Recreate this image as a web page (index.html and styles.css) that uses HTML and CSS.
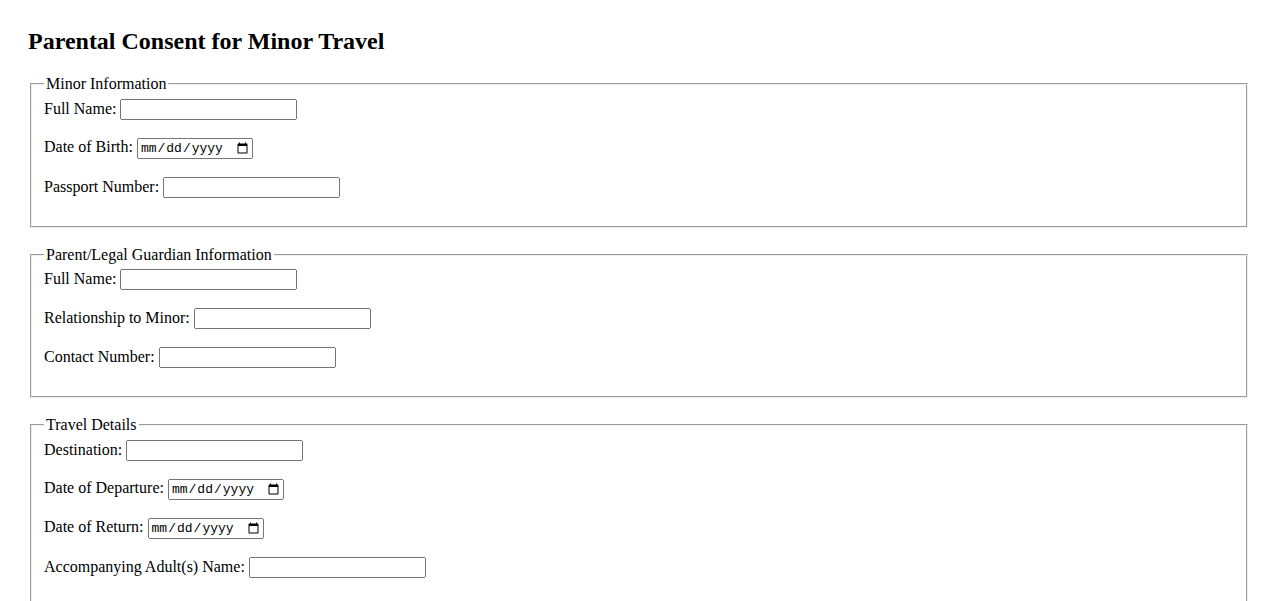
FILE: index.html
```html
<!DOCTYPE html>
<html>
<head>
<meta charset="utf-8">
<title>Parental Consent for Minor Travel</title>
<link rel="stylesheet" href="styles.css">
</head>
<body>
<h2 class="title">Parental Consent for Minor Travel</h2>
<form class="form">
  <fieldset class="section">
    <legend>Minor Information</legend>
    <div class="row"><label>Full Name: <input type="text" class="text"></label></div>
    <div class="row"><label>Date of Birth: <input type="date" class="date"></label></div>
    <div class="row"><label>Passport Number: <input type="text" class="text"></label></div>
  </fieldset>
  <fieldset class="section">
    <legend>Parent/Legal Guardian Information</legend>
    <div class="row"><label>Full Name: <input type="text" class="text"></label></div>
    <div class="row"><label>Relationship to Minor: <input type="text" class="text"></label></div>
    <div class="row"><label>Contact Number: <input type="text" class="text"></label></div>
  </fieldset>
  <fieldset class="section">
    <legend>Travel Details</legend>
    <div class="row"><label>Destination: <input type="text" class="text"></label></div>
    <div class="row"><label>Date of Departure: <input type="date" class="date"></label></div>
    <div class="row"><label>Date of Return: <input type="date" class="date"></label></div>
    <div class="row"><label>Accompanying Adult(s) Name: <input type="text" class="text"></label></div>
  </fieldset>
</form>
</body>
</html>
```

FILE: styles.css
```css
body {
  margin: 8px;
  padding: 20px;
  font-family: "Liberation Serif", "Times New Roman", serif;
  font-size: 16px;
  color: #000;
  background: #fff;
}
.title {
  margin: 0 0 20px;
  font-size: 24px;
  font-weight: bold;
}
.form {
  margin: 0;
}
.section {
  margin: 0 2px 18px;
}
.row {
  height: 23px;
  margin-bottom: 16px;
}
.text {
  box-sizing: border-box;
  width: 177px;
  height: 21px;
  font-family: "Liberation Sans", Arial, sans-serif;
  font-size: 13.333px;
}
.date {
  box-sizing: border-box;
  width: 116px;
  height: 21px;
  font-family: "Liberation Mono", "DejaVu Sans Mono", monospace;
  font-size: 13px;
}
```
